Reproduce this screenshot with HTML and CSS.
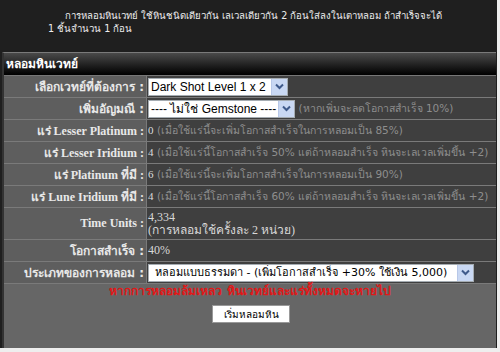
FILE: index.html
```html
<!DOCTYPE html>
<html lang="th">
<head>
    <meta charset="UTF-8">
    <title>หลอมหินเวทย์</title>
    <link rel="stylesheet" href="styles.css">
</head>
<body>
<div class="page">
    <p class="intro">การหลอมหินเวทย์ ใช้หินชนิดเดียวกัน เลเวลเดียวกัน 2 ก้อนใส่ลงในเตาหลอม ถ้าสำเร็จจะได้<br>1 ชิ้นจำนวน 1 ก้อน</p>

    <div class="panel">
        <div class="panel-head">หลอมหินเวทย์</div>
        <table class="form">
            <tr>
                <td class="label sans">เลือกเวทย์ที่ต้องการ :</td>
                <td class="value">
                    <span class="select w1"><span class="select-text">Dark Shot Level 1 x 2</span><span class="arrow"><svg width="9" height="7" viewBox="0 0 9 7"><path d="M1 1.5 L4.5 5 L8 1.5" fill="none" stroke="#3f5a8a" stroke-width="2"/></svg></span></span>
                </td>
            </tr>
            <tr>
                <td class="label sans">เพิ่มอัญมณี :</td>
                <td class="value">
                    <span class="select w2"><span class="select-text">---- ไม่ใช่ Gemstone ----</span><span class="arrow"><svg width="9" height="7" viewBox="0 0 9 7"><path d="M1 1.5 L4.5 5 L8 1.5" fill="none" stroke="#3f5a8a" stroke-width="2"/></svg></span></span>
                    <span class="note">(หากเพิ่มจะลดโอกาสสำเร็จ 10%)</span>
                </td>
            </tr>
            <tr>
                <td class="label">แร่ Lesser Platinum :</td>
                <td class="value"><span class="num">0</span> <span class="note">(เมื่อใช้แร่นี้จะเพิ่มโอกาสสำเร็จในการหลอมเป็น 85%)</span></td>
            </tr>
            <tr>
                <td class="label">แร่ Lesser Iridium :</td>
                <td class="value"><span class="num">4</span> <span class="note">(เมื่อใช้แร่นี้โอกาสสำเร็จ 50% แต่ถ้าหลอมสำเร็จ หินจะเลเวลเพิ่มขึ้น +2)</span></td>
            </tr>
            <tr>
                <td class="label">แร่ Platinum ที่มี :</td>
                <td class="value"><span class="num">6</span> <span class="note">(เมื่อใช้แร่นี้จะเพิ่มโอกาสสำเร็จในการหลอมเป็น 90%)</span></td>
            </tr>
            <tr>
                <td class="label">แร่ Lune Iridium ที่มี :</td>
                <td class="value"><span class="num">4</span> <span class="note">(เมื่อใช้แร่นี้โอกาสสำเร็จ 60% แต่ถ้าหลอมสำเร็จ หินจะเลเวลเพิ่มขึ้น +2)</span></td>
            </tr>
            <tr class="tall">
                <td class="label">Time Units :</td>
                <td class="value serif">4,334<br>(การหลอมใช้ครั้งละ 2 หน่วย)</td>
            </tr>
            <tr>
                <td class="label sans">โอกาสสำเร็จ :</td>
                <td class="value serif">40%</td>
            </tr>
            <tr>
                <td class="label sans">ประเภทของการหลอม :</td>
                <td class="value">
                    <span class="select w3"><span class="select-text">หลอมแบบธรรมดา - (เพิ่มโอกาสสำเร็จ +30% ใช้เงิน 5,000)</span><span class="arrow"><svg width="9" height="7" viewBox="0 0 9 7"><path d="M1 1.5 L4.5 5 L8 1.5" fill="none" stroke="#3f5a8a" stroke-width="2"/></svg></span></span>
                </td>
            </tr>
        </table>
        <div class="panel-foot">
            <div class="warning">หากการหลอมล้มเหลว หินเวทย์และแร่ทั้งหมดจะหายไป</div>
            <button class="start">เริ่มหลอมหิน</button>
        </div>
    </div>
</div>
</body>
</html>
```

FILE: styles.css
```css
html {
    background: #eeeeee;
}
body {
    margin: 0;
    font-family: Tahoma, "DejaVu Sans", "Noto Sans", sans-serif;
    font-size: 11px;
}
.page {
    width: 497px;
    height: 348px;
    background: #1f1f1f;
    overflow: hidden;
}
.intro {
    margin: 0;
    padding: 9px 0 0 48px;
    height: 52px;
    box-sizing: border-box;
    text-indent: 17px;
    color: #eeeeee;
    font-size: 9.6px;
    line-height: 13px;
}
.panel {
    margin-left: 2px;
    width: 494px;
    height: 296px;
    background: #666666;
    border-left: 2px solid #333333;
    border-top: 1px solid #7a7a7a;
    box-sizing: border-box;
}
.panel-head {
    height: 22px;
    line-height: 22px;
    padding-left: 2px;
    background: linear-gradient(#4a4a4a, #0a0a0a 85%, #000000);
    color: #ffffff;
    font-weight: bold;
    font-size: 12px;
    border-bottom: 1px solid #777777;
}
.form {
    width: 100%;
    border-collapse: collapse;
}
.form td {
    height: 21px;
    padding: 0;
    border-bottom: 1px solid #7a7a7a;
    white-space: nowrap;
    overflow: hidden;
}
.form tr.tall td {
    height: 31px;
}
.label {
    width: 140px;
    padding-right: 2px !important;
    text-align: right;
    background: #5e5e5e;
    color: #e8e8e8;
    font-family: "Liberation Serif", serif;
    font-weight: bold;
    font-size: 12px;
    border-right: 1px solid #7a7a7a;
}
.label.sans {
    font-family: Tahoma, "DejaVu Sans", sans-serif;
    font-size: 12px;
}
.value {
    max-width: 350px;
    padding-left: 1px !important;
    background: #3f3f3f;
    color: #d8d8d8;
}
.value.serif {
    font-family: "Liberation Serif", serif;
    font-size: 12px;
    line-height: 13px;
}
.num {
    font-family: "Liberation Serif", serif;
    color: #dddddd;
}
.note {
    color: #8e8e8e;
    font-size: 10.5px;
}
.select {
    display: inline-flex;
    align-items: stretch;
    vertical-align: middle;
    height: 18px;
    box-sizing: border-box;
    background: #ffffff;
    border: 1px solid #a5acb2;
    font-family: "Liberation Sans", sans-serif;
    font-size: 12px;
    color: #000000;
}
.select-text {
    flex: 1;
    padding-left: 2px;
    line-height: 16px;
    overflow: hidden;
}
.select .arrow {
    width: 15px;
    display: flex;
    align-items: center;
    justify-content: center;
    background: #c9d8f3;
    border-left: 1px solid #b8c8e8;
}
.w1 {
    width: 140px;
}
.w2 {
    width: 147px;
}
.w3 {
    width: 326px;
}
.w3 .select-text {
    font-family: Tahoma, "DejaVu Sans", sans-serif;
    font-size: 11px;
    padding-left: 6px;
}
.panel-foot {
    text-align: center;
}
.warning {
    color: #e01818;
    font-weight: bold;
    font-size: 12px;
    height: 18px;
    line-height: 14px;
}
.start {
    display: block;
    width: 78px;
    height: 18px;
    margin: 3px 0 0 208px;
    padding: 0;
    background: #ffffff;
    border: 1px solid #999999;
    font-family: Tahoma, "DejaVu Sans", sans-serif;
    font-size: 10px;
    color: #000000;
}
```
